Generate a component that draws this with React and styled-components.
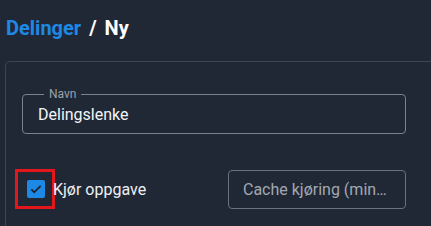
import React from "react";
import styled, { createGlobalStyle } from "styled-components";

const Global = createGlobalStyle`
  html, body { margin: 0; padding: 0; background: #202836; }
  body { font-family: Roboto, "Liberation Sans", sans-serif; color: #f3f4f6; overflow: hidden; }
  * { box-sizing: border-box; }
`;

const Page = styled.div`
  width: 431px;
  height: 226px;
  overflow: hidden;
  padding: 0 0 0 5px;
`;

const Title = styled.h1`
  margin: 0;
  padding: 15px 0 0 1px;
  height: 61px;
  font-size: 20px;
  font-weight: 700;
  line-height: 26px;
  color: #ffffff;
  display: flex;
  gap: 8px;
`;

const Crumb = styled.span`
  color: ${(p) => (p.$link ? "#1e88e5" : "#ffffff")};
`;

const Panel = styled.section`
  width: 440px;
  height: 200px;
  border: 1px solid #3d4553;
  border-radius: 5px;
  padding: 32px 0 0 16px;
`;

const Field = styled.fieldset`
  position: relative;
  margin: 0;
  width: 384px;
  height: 40px;
  border: 1px solid #7b828d;
  border-radius: 4px;
  padding: 0 15px;
  display: flex;
  align-items: center;
`;

const Legend = styled.legend`
  position: absolute;
  top: -8px;
  left: 21px;
  padding: 0 5px;
  background: #202836;
  font-size: 12px;
  line-height: 14px;
  color: #9ca1aa;
`;

const TextInput = styled.input`
  all: unset;
  font-family: Roboto, "Liberation Sans", sans-serif;
  font-size: 16px;
  color: #f3f4f6;
  width: 100%;
  margin-top: 1px;
`;

const Row = styled.div`
  display: grid;
  grid-template-columns: 1fr 178px;
  width: 384px;
  margin: 34px 0 0 0;
  align-items: center;
`;

const CheckLabel = styled.label`
  display: flex;
  align-items: center;
  font-size: 16px;
  color: #eef0f3;
  margin-left: -7px;
  padding-top: 1px;
`;

const Highlight = styled.span`
  width: 40px;
  height: 40px;
  border: 3px solid #e3161b;
  display: flex;
  align-items: center;
  justify-content: center;
  padding-left: 1px;
  margin-right: -2px;
  margin-top: -1px;
`;

const Box = styled.span`
  width: 18px;
  height: 18px;
  border-radius: 2px;
  background: #1e88e5;
  display: flex;
  align-items: center;
  justify-content: center;
`;

const CacheInput = styled.input`
  width: 178px;
  height: 39px;
  margin-top: 2px;
  background: transparent;
  border: 1px solid #6b727d;
  border-radius: 4px;
  padding: 0 14px;
  font-family: Roboto, "Liberation Sans", sans-serif;
  font-size: 16px;
  color: #f3f4f6;
  text-overflow: ellipsis;
  outline: none;
  &::placeholder { color: #a3a8b0; opacity: 1; }
`;

export default function App() {
  return (
    <Page>
      <Global />
      <Title>
        <Crumb $link>Delinger</Crumb>
        <Crumb>/</Crumb>
        <Crumb>Ny</Crumb>
      </Title>
      <Panel>
        <Field>
          <Legend>Navn</Legend>
          <TextInput defaultValue="Delingslenke" />
        </Field>
        <Row>
          <CheckLabel>
            <Highlight>
              <Box>
                <svg width="14" height="14" viewBox="0 0 24 24">
                  <path d="M4 12.5l5 5L20 6.5" fill="none" stroke="#1c2431" strokeWidth="3" />
                </svg>
              </Box>
            </Highlight>
            Kjør oppgave
          </CheckLabel>
          <CacheInput placeholder="Cache kjøring (minutter)" />
        </Row>
      </Panel>
    </Page>
  );
}
